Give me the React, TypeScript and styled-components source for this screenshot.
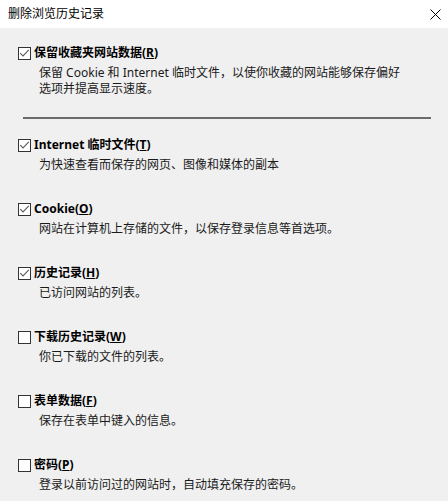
import React from 'react';
import styled, { createGlobalStyle } from 'styled-components';

const GlobalStyle = createGlobalStyle`
    html, body {
        margin: 0;
        padding: 0;
        background: #f0f0f0;
    }
    body {
        font-family: "Noto Sans", "Noto Sans CJK SC", sans-serif;
        font-size: 12px;
        color: #000;
    }
`;

type Item = {
    label: string;
    key: string;
    desc: string[];
    checked: boolean;
};

const items: Item[] = [
    { label: 'Internet 临时文件', key: 'T', desc: ['为快速查看而保存的网页、图像和媒体的副本'], checked: true },
    { label: 'Cookie', key: 'O', desc: ['网站在计算机上存储的文件，以保存登录信息等首选项。'], checked: true },
    { label: '历史记录', key: 'H', desc: ['已访问网站的列表。'], checked: true },
    { label: '下载历史记录', key: 'W', desc: ['你已下载的文件的列表。'], checked: false },
    { label: '表单数据', key: 'F', desc: ['保存在表单中键入的信息。'], checked: false },
    { label: '密码', key: 'P', desc: ['登录以前访问过的网站时，自动填充保存的密码。'], checked: false },
];

function CheckBox({ checked }: { checked: boolean }) {
    return (
        <Box>
            {checked && (
                <svg width="11" height="11" viewBox="0 0 11 11">
                    <polyline points="1.2,5.2 4,8 9.8,1.8" fill="none" stroke="#5a5a5a" strokeWidth="1.1" />
                </svg>
            )}
        </Box>
    );
}

function Option({ item, first }: { item: Item; first?: boolean }) {
    return (
        <Section $first={first}>
            <Row>
                <CheckBox checked={item.checked} />
                <Label>
                    {item.label}(<u>{item.key}</u>)
                </Label>
            </Row>
            <Desc>
                {item.desc.map((line, i) => (
                    <DescLine key={i}>{line}</DescLine>
                ))}
            </Desc>
        </Section>
    );
}

function App() {
    return (
        <>
            <GlobalStyle />
            <Window>
                <TitleBar>
                    <Title>删除浏览历史记录</Title>
                    <Close>
                        <svg width="11" height="11" viewBox="0 0 11 11">
                            <path d="M0.5 0.5 L10.5 10.5 M10.5 0.5 L0.5 10.5" stroke="#000" strokeWidth="1" />
                        </svg>
                    </Close>
                </TitleBar>
                <Content>
                    <Option
                        first
                        item={{
                            label: '保留收藏夹网站数据',
                            key: 'R',
                            desc: ['保留 Cookie 和 Internet 临时文件，以使你收藏的网站能够保存偏好', '选项并提高显示速度。'],
                            checked: true,
                        }}
                    />
                    <Separator />
                    {items.map((it) => (
                        <Option key={it.key} item={it} />
                    ))}
                </Content>
            </Window>
        </>
    );
}

const Window = styled.div`
    width: 448px;
    height: 501px;
    background: #f0f0f0;
    overflow: hidden;
`;

const TitleBar = styled.div`
    height: 28px;
    background: #fff;
    display: flex;
    align-items: center;
    justify-content: space-between;
    padding: 0 7px 0 8px;
    box-sizing: border-box;
`;

const Title = styled.div`
    font-family: "Noto Sans CJK SC", sans-serif;
    font-size: 12px;
    line-height: 16px;
    margin-top: -2px;
`;

const Close = styled.div`
    display: flex;
    margin-top: 0;
`;

const Content = styled.div`
    padding: 17px 17px 0 18px;
    display: flex;
    flex-direction: column;
`;

const Section = styled.div<{ $first?: boolean }>`
    display: flex;
    flex-direction: column;
    margin-bottom: ${(p) => (p.$first ? '0' : '28px')};
`;

const Row = styled.div`
    display: flex;
    align-items: center;
    height: 16px;
`;

const Box = styled.div`
    width: 13px;
    height: 13px;
    box-sizing: border-box;
    border: 1px solid #333;
    background: #fff;
    display: flex;
    align-items: center;
    justify-content: center;
    flex-shrink: 0;
`;

const Label = styled.span`
    margin-left: 3px;
    font-weight: 700;
    font-size: 12px;
    line-height: 16px;
    white-space: nowrap;

    u {
        text-underline-offset: 1px;
    }
`;

const Desc = styled.div`
    margin-top: 4px;
    padding-left: 21px;
    display: flex;
    flex-direction: column;
`;

const DescLine = styled.div`
    font-size: 12px;
    line-height: 16px;
    color: #1a1a1a;
    white-space: nowrap;
`;

const Separator = styled.div`
    height: 2px;
    background: #6b6b6b;
    margin: 20px 0 18px 5px;
`;

export default App;
